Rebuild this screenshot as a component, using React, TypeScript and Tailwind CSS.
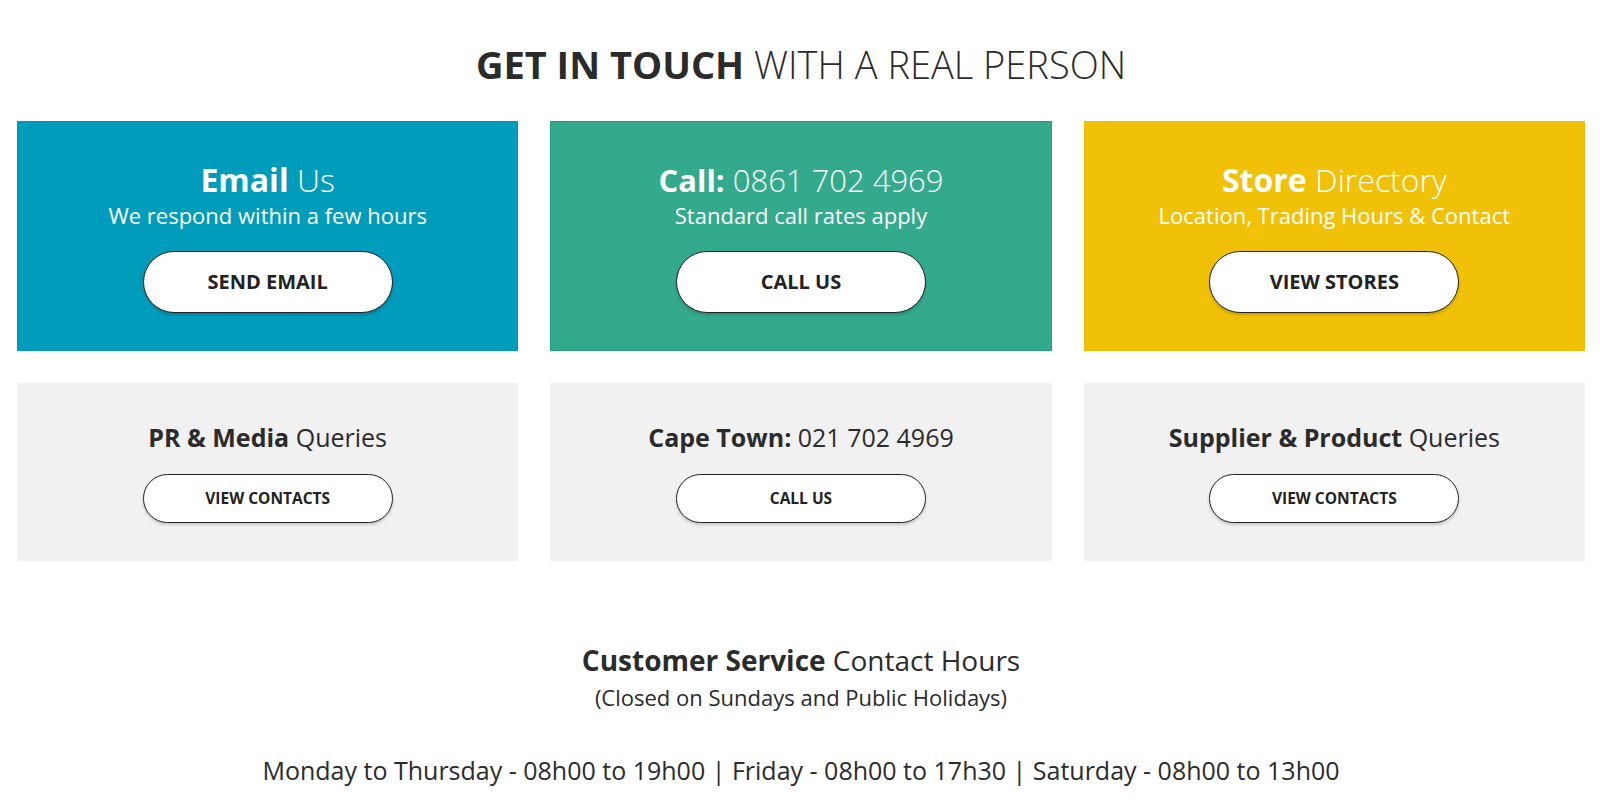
const font = "font-['Open_Sans','Noto_Sans',sans-serif]";

function Pill({ label, big }: { label: string; big?: boolean }) {
  return (
    <button
      className={`w-[250px] rounded-full border-[1.5px] border-[#222] bg-white font-bold uppercase text-[#222] shadow-[0_2px_3px_rgba(0,0,0,0.18)] ${
        big ? "h-[62px] text-[20px]" : "h-[49px] text-[15.5px]"
      }`}
    >
      {label}
    </button>
  );
}

function ColourCard({
  bg,
  border,
  bold,
  light,
  sub,
  cta,
  size = "text-[32px]",
}: {
  bg: string;
  border: string;
  bold: string;
  light: string;
  sub: string;
  cta: string;
  size?: string;
}) {
  return (
    <div className={`flex h-[230px] flex-col items-center border pt-[39px] text-white ${bg} ${border}`}>
      <h2 className={`${size} leading-[38px]`}>
        <span className="font-bold">{bold}</span> <span className="font-light">{light}</span>
      </h2>
      <p className="text-[22px] leading-[32px]">{sub}</p>
      <div className="mt-[20px]">
        <Pill label={cta} big />
      </div>
    </div>
  );
}

function GreyCard({ bold, rest, cta }: { bold: string; rest: string; cta: string }) {
  return (
    <div className="flex h-[178px] flex-col items-center bg-[#f1f1f1] pt-[36px] text-[#2b2b2b]">
      <h3 className="text-[25px] leading-[36px]">
        <span className="font-bold">{bold}</span> {rest}
      </h3>
      <div className="mt-[19px]">
        <Pill label={cta} />
      </div>
    </div>
  );
}

export default function App() {
  return (
    <div className={`min-h-screen bg-white pt-[39px] pr-[15px] pb-10 pl-[17px] text-[#2b2b2b] ${font}`}>
      <h1 className="text-center text-[38px] leading-[50px] uppercase">
        <span className="font-bold">Get in touch</span> <span className="font-light">with a real person</span>
      </h1>

      <div className="mt-[32px] grid grid-cols-3 gap-8">
        <ColourCard
          bg="bg-[#009cbb]"
          border="border-[#0096b4]"
          bold="Email"
          light="Us"
          sub="We respond within a few hours"
          cta="Send Email"
        />
        <ColourCard
          bg="bg-[#32aa8b]"
          border="border-[#279d7f]"
          bold="Call:"
          light="0861 702 4969"
          sub="Standard call rates apply"
          cta="Call Us"
          size="text-[31px]"
        />
        <ColourCard
          bg="bg-[#f1c107]"
          border="border-[#efbd03]"
          bold="Store"
          light="Directory"
          sub="Location, Trading Hours & Contact"
          cta="View Stores"
        />

        <GreyCard bold="PR & Media" rest="Queries" cta="View Contacts" />
        <GreyCard bold="Cape Town:" rest="021 702 4969" cta="Call Us" />
        <GreyCard bold="Supplier & Product" rest="Queries" cta="View Contacts" />
      </div>

      <div className="mt-[81px] text-center">
        <h4 className="text-[28px] leading-[36px]">
          <span className="font-bold">Customer Service</span> Contact Hours
        </h4>
        <p className="mt-[5px] text-[22px] leading-[28px]">(Closed on Sundays and Public Holidays)</p>
        <p className="mt-[42px] text-[25px] leading-[34px]">
          Monday to Thursday - 08h00 to 19h00 | Friday - 08h00 to 17h30 | Saturday - 08h00 to 13h00
        </p>
      </div>
    </div>
  );
}
